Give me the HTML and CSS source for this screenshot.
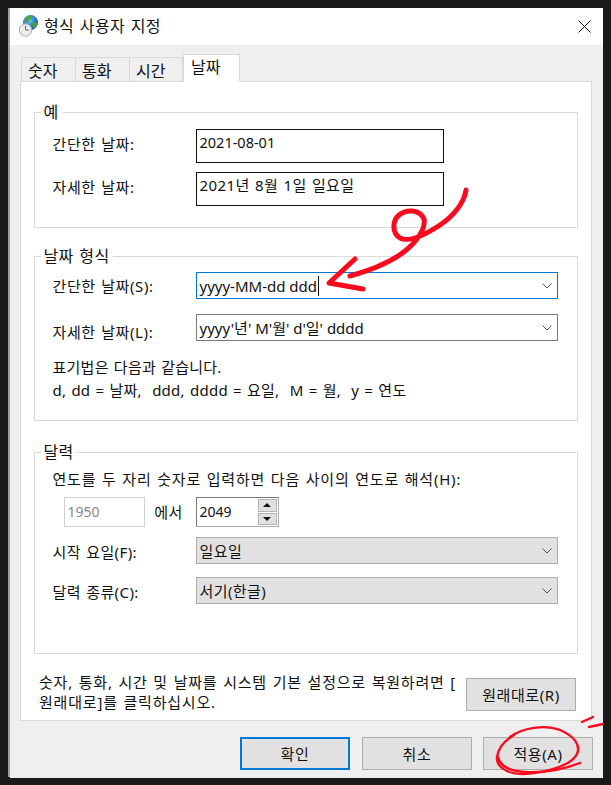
FILE: index.html
```html
<!DOCTYPE html>
<html lang="ko">
<head>
<meta charset="utf-8">
<title>형식 사용자 지정</title>
<link rel="stylesheet" href="styles.css">
</head>
<body>
<div class="window">
  <header class="titlebar">
    <svg class="app-icon" viewBox="0 0 20 22" width="20" height="22">
      <defs>
        <radialGradient id="globe" cx="0.4" cy="0.35" r="0.7"><stop offset="0" stop-color="#7fc8f0"/><stop offset="0.6" stop-color="#1f7fd0"/><stop offset="1" stop-color="#0f4f96"/></radialGradient>
      </defs>
      <circle cx="11.500" cy="7.500" r="7.500" fill="url(#globe)"/>
      <path d="M7.500 2c2-1.500 4.500-1.500 5.500-.5l-1 2.500-2 .5-.5 2.500-2.500.5-1.500-2zM13 8l3.500-1 2 2-1.500 3.500-2.500 1-1-2.500z" fill="#4f9e3a"/>
      <circle cx="6.500" cy="15" r="6.200" fill="#eeeeee" stroke="#a8a8a8"/>
      <path d="M6.500 10.800V15h3.500" fill="none" stroke="#666" stroke-width="1"/>
    </svg>
    <span class="title">형식 사용자 지정</span>
    <svg class="close" viewBox="0 0 13 13" width="13" height="13"><path d="M.5.5l12 12M12.500.5l-12 12" stroke="#111" stroke-width="1" fill="none"/></svg>
  </header>
  <div class="body">
    <nav class="tabs">
      <span class="tab">숫자</span>
      <span class="tab">통화</span>
      <span class="tab">시간</span>
      <span class="tab tab-active">날짜</span>
    </nav>
    <main class="page">
      <fieldset class="group group-example">
        <legend>예</legend>
        <div class="row row-example"><span class="label">간단한 날짜:</span><div class="readout"><span class="digits">2021-08-01</span></div></div>
        <div class="row row-example"><span class="label">자세한 날짜:</span><div class="readout">2021년 8월 1일 일요일</div></div>
      </fieldset>
      <fieldset class="group group-format">
        <legend>날짜 형식</legend>
        <div class="row row-combo"><span class="label">간단한 날짜(S):</span>
          <div class="combo combo-focus"><span class="pattern">yyyy-MM-dd ddd</span><i class="caret"></i><svg class="chev" viewBox="0 0 10 6" width="10" height="6"><path d="M.5.5L5 5 9.500.5" fill="none" stroke="#555"/></svg></div></div>
        <div class="row row-combo"><span class="label label-low">자세한 날짜(L):</span>
          <div class="combo"><span class="pattern">yyyy'년' M'월' d'일' dddd</span><svg class="chev" viewBox="0 0 10 6" width="10" height="6"><path d="M.5.5L5 5 9.500.5" fill="none" stroke="#555"/></svg></div></div>
        <p class="note">표기법은 다음과 같습니다.<br>d, dd = 날짜, &nbsp;ddd, dddd = 요일, &nbsp;M = 월, &nbsp;y = 연도</p>
      </fieldset>
      <fieldset class="group group-calendar">
        <legend>달력</legend>
        <p class="year-note">연도를 두 자리 숫자로 입력하면 다음 사이의 연도로 해석(H):</p>
        <div class="year-row">
          <div class="year-from">1950</div>
          <span class="year-sep">에서</span>
          <div class="spin">
            <span class="spin-value">2049</span>
            <div class="spin-btns">
              <span class="spin-btn"><svg viewBox="0 0 8 4" width="8" height="4"><path d="M4 0l4 4H0z" fill="#111"/></svg></span>
              <span class="spin-btn"><svg viewBox="0 0 8 4" width="8" height="4"><path d="M0 0h8L4 4z" fill="#111"/></svg></span>
            </div>
          </div>
        </div>
        <div class="row row-select"><span class="label">시작 요일(F):</span>
          <div class="combo combo-disabled"><span>일요일</span><svg class="chev" viewBox="0 0 10 6" width="10" height="6"><path d="M.5.5L5 5 9.500.5" fill="none" stroke="#555"/></svg></div></div>
        <div class="row row-select"><span class="label">달력 종류(C):</span>
          <div class="combo combo-disabled"><span>서기(한글)</span><svg class="chev" viewBox="0 0 10 6" width="10" height="6"><path d="M.5.5L5 5 9.500.5" fill="none" stroke="#555"/></svg></div></div>
      </fieldset>
      <div class="restore">
        <p>숫자, 통화, 시간 및 날짜를 시스템 기본 설정으로 복원하려면 [<br>원래대로]를 클릭하십시오.</p>
        <button class="btn btn-restore" type="button">원래대로(R)</button>
      </div>
    </main>
    <footer class="actions">
      <button class="btn btn-primary" type="button">확인</button>
      <button class="btn" type="button">취소</button>
      <button class="btn" type="button">적용(A)</button>
    </footer>
  </div>
  <svg class="scribble" viewBox="0 0 611 785" width="611" height="785">
    <path class="ink-thick" d="M466 190C464 204 452 217 440 225C428 233 410 243 400 238C392 233 392 221 399 215C406 209 420 209 424 219C426 230 415 243 405 251C390 263 368 271 350 276"/>
    <path class="ink-thick" d="M355 259L329 283L363 289"/>
    <path class="ink-thin" d="M510 737C522 728 545 724 560 730C574 736 581 745 577 754C571 766 545 773 523 774C506 774 496 766 497 757C498 749 504 741 514 735"/>
    <path class="ink-thin" d="M498 757C500 766 510 771 525 772C545 773 565 769 580 763"/>
    <path class="ink-thin" d="M582 722L593 717M589 727L603 724"/>
  </svg>
</div>
</body>
</html>
```
FILE: styles.css
```css
* { box-sizing: border-box; }
html, body { margin: 0; height: 100%; }
body {
  background: #1a1a1a;
  padding: 8px;
  font-family: "Noto Sans", "Noto Sans CJK KR", sans-serif;
  font-size: 15px;
  letter-spacing: 0.4px;
  word-spacing: 1px;
  line-height: 18px;
  color: #111;
  overflow: hidden;
}
.window {
  width: 595px;
  height: 769px;
  border-left: 2px solid #a0a0a0;
  display: flex;
  flex-direction: column;
}
.titlebar {
  height: 37px;
  background: #fff;
  display: flex;
  align-items: center;
  padding: 0 12px 2px 9px;
  flex: none;
}
.app-icon { flex: none; margin-right: 5px; }
.title { font-size: 16px; letter-spacing: 0.4px; }
.close { margin-left: auto; margin-top: 2px; }
.body {
  flex: 1;
  background: #efefef;
  padding: 10px 11px 8px 9.500px;
  display: flex;
  flex-direction: column;
}
.tabs { display: flex; height: 27px; padding-left: 1.500px; align-items: flex-end; position: relative; z-index: 1; margin-bottom: -1px; }
.tab {
  width: 54px;
  height: 25px;
  border: 1px solid #d9d9d9;
  border-right: 0;
  border-bottom: 0;
  padding-left: 6px;
  line-height: 26px;
  font-size: 16px;
  letter-spacing: 0;
}
.tab:nth-child(3) { border-right: 1px solid #d9d9d9; }
.tab-active {
  width: 57px;
  height: 28px;
  background: #fff;
  border: 1px solid #d9d9d9;
  border-bottom: 1px solid #fff;
  padding-left: 7px;
  line-height: 25px;
}
.page {
  height: 640px;
  background: #fff;
  border: 1px solid #d9d9d9;
  padding: 21px 13px 0 13px;
}
.group {
  margin: 0;
  padding: 0 0 0 18px;
  border: 1px solid #d9d9d9;
  min-width: 0;
}
.group legend {
  margin-left: -12px;
  padding: 0 3px;
  font-size: 16px;
  line-height: 18px;
}
.group-example { height: 125px; padding-top: 8px; }
.group-format { height: 174px; margin-top: 19px; padding-top: 7px; }
.group-calendar { height: 211px; margin-top: 22px; padding-top: 9px; }
.row { display: flex; align-items: center; }
.label { width: 143px; flex: none; }
.row-example { height: 34px; margin-bottom: 9px; }
.row-example .label { padding-bottom: 5px; }
.row-combo .label, .row-example .label { letter-spacing: 0.6px; }
.readout {
  width: 248px;
  height: 34px;
  border: 1px solid #111;
  padding: 2px 3px;
  line-height: 20px;
}
.digits { font-size: 14.500px; letter-spacing: 0; }
.row-combo { height: 27px; margin-bottom: 15px; }
.label-low { padding-top: 8px; }
.row-select { height: 27px; margin-bottom: 13px; }
.row-select .label { padding-top: 2px; }
.combo {
  width: 362px;
  height: 27px;
  border: 1px solid #7a7a7a;
  display: flex;
  align-items: center;
  padding: 0 5px 0 3px;
}
.pattern { letter-spacing: 0; word-spacing: 0; }
.combo-focus { border-color: #0078d7; }
.combo-disabled { background: #e1e1e1; border-color: #adadad; }
.caret { width: 1px; height: 20px; background: #111; margin-left: 1px; }
.chev { margin-left: auto; }
.note { margin: 14px 0 0; line-height: 23px; letter-spacing: 0.25px; }
.year-note { margin: 0; letter-spacing: 0.8px; }
.year-row { display: flex; align-items: center; margin: 9px 0 10px 11px; }
.year-from {
  width: 81px;
  height: 30px;
  border: 1px solid #cfcfcf;
  color: #8a8a8a;
  padding: 0 3px;
  font-size: 14px;
  letter-spacing: 0;
  line-height: 27px;
}
.year-sep { width: 51px; padding-right: 3px; text-align: center; }
.spin {
  width: 83px;
  height: 30px;
  display: flex;
  border: 1px solid #adadad;
  border-left-color: #7a7a7a;
  border-top-color: #7a7a7a;
}
.spin-value { flex: 1; padding: 0 3px; font-size: 14px; letter-spacing: 0; line-height: 27px; }
.spin-btns { width: 19px; margin: 1px 1px 1px 0; display: flex; flex-direction: column; gap: 1px; }
.spin-btn {
  flex: 1;
  background: #e1e1e1;
  border: 1px solid #b5b5b5;
  display: flex;
  align-items: center;
  justify-content: center;
}
.restore {
  display: flex;
  justify-content: space-between;
  padding: 13px 2px 0 5.500px;
  align-items: flex-start;
}
.restore p { margin: 5px 0 0; line-height: 20px; letter-spacing: 0.8px; white-space: nowrap; }
.btn {
  width: 110px;
  height: 33px;
  background: #e1e1e1;
  border: 1px solid #adadad;
  font: inherit;
  letter-spacing: 0.6px;
  color: #111;
  padding: 0;
}
.btn-restore { margin-top: 11px; }
.btn-primary { border: 2px solid #0078d7; margin-right: 1px; }
.actions {
  display: flex;
  justify-content: flex-end;
  gap: 11px;
  margin-top: 16px;
  margin-right: -1px;
}
.scribble { position: absolute; left: 0; top: 0; pointer-events: none; }
.scribble path { fill: none; stroke: #fb0a1e; stroke-linecap: round; stroke-linejoin: round; }
.ink-thick { stroke-width: 5; }
.ink-thin { stroke-width: 2.400; }
```
